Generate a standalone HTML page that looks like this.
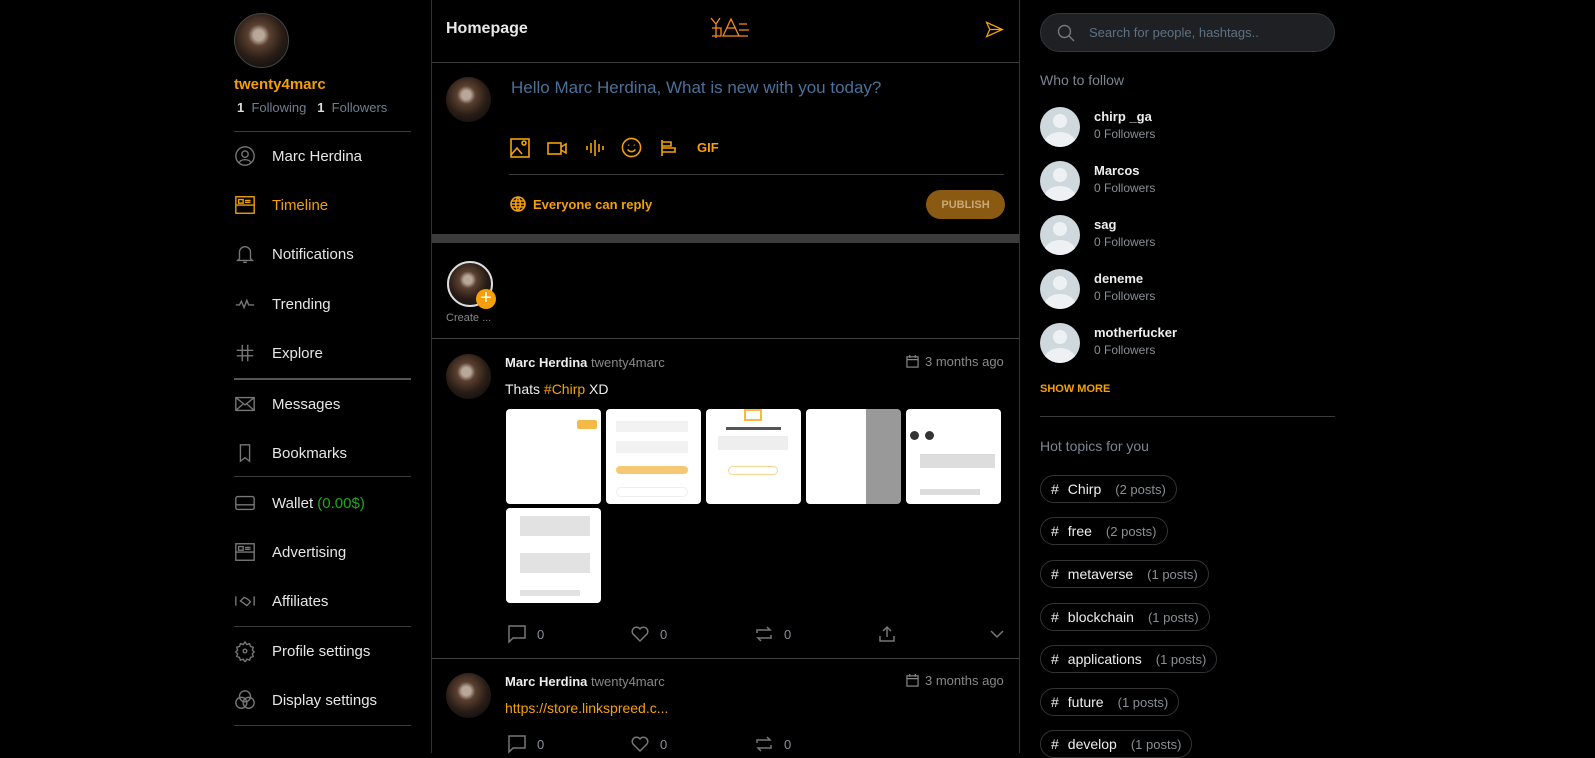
<!DOCTYPE html>
<html><head><meta charset="utf-8"><style>
*{box-sizing:border-box;margin:0;padding:0}
body{width:1595px;height:753px;background:#000;font-family:"Liberation Sans",Arial,sans-serif;color:#e6e6e6;position:relative;overflow:hidden}
.a{position:absolute}
.av{border-radius:50%;background:radial-gradient(circle at 45% 40%,#b9a89a 0 12%,#5a4030 25%,#2a1d16 55%,#111 80%);}
.nav{position:absolute;left:234px;width:177px;height:24px;font-size:15px;display:flex;align-items:center}
.nav svg{width:22px;height:22px;margin-right:16px;fill:none;stroke:#777;stroke-width:1.5}
.hr{position:absolute;background:#3a3a3a;height:1px}
.fw{position:absolute;left:1040px;width:300px;height:40px}
.fw .c{position:absolute;left:0;top:0;width:40px;height:40px;border-radius:50%;background:#cfd8dd;overflow:hidden}
.fw .c:before{content:"";position:absolute;left:13px;top:7px;width:14px;height:14px;border-radius:50%;background:#eef1f3}
.fw .c:after{content:"";position:absolute;left:4px;top:25px;width:32px;height:24px;border-radius:50%;background:#eef1f3}
.fw b{position:absolute;left:54px;top:2px;font-size:13px;color:#eee}
.fw span{position:absolute;left:54px;top:20px;font-size:12px;color:#8a8f94}
.tag{position:absolute;left:1040px;height:28px;border:1px solid #333;border-radius:14px;font-size:14px;padding:0 10px;display:flex;align-items:center;color:#eee;white-space:nowrap}
.tag i{font-style:normal;color:#8a8f94;font-size:13px;margin-left:14px}
.tag em{font-style:normal;margin-right:9px}
.ic{fill:none;stroke:#f5a00a;stroke-width:1.6}
.th{position:absolute;top:409px;width:95px;height:95px;background:#fff;border-radius:4px}
.ft{position:absolute;font-size:13px;color:#8a8f94;display:flex;align-items:center}
.ft svg{width:20px;height:20px;fill:none;stroke:#777;stroke-width:1.5;margin-right:10px}
</style></head><body>
<!-- left -->
<div class="a av" style="left:234px;top:13px;width:55px;height:55px;border:1px solid #444"></div>
<div class="a" style="left:234px;top:76px;font-size:15px;font-weight:bold;color:#f59e0b">twenty4marc</div>
<div class="a" style="left:237px;top:100px;font-size:13px;color:#6f7f8f"><b style="color:#ddd">1</b>&nbsp; Following &nbsp; <b style="color:#ddd">1</b>&nbsp; Followers</div>
<div class="hr" style="left:234px;top:131px;width:177px"></div>
<div class="nav" style="top:144px"><svg viewBox="0 0 24 24"><circle cx="12" cy="12" r="10"/><circle cx="12" cy="10" r="3.5"/><path d="M6 19c1-4 11-4 12 0"/></svg>Marc Herdina</div>
<div class="nav" style="top:193px;color:#f59e0b"><svg viewBox="0 0 24 24" style="stroke:#f59e0b"><rect x="2" y="3" width="20" height="18"/><path d="M2 12h20M5 6h5v4H5zM12 7h6M12 9h6"/></svg>Timeline</div>
<div class="nav" style="top:242px"><svg viewBox="0 0 24 24"><path d="M6 17V10a6 6 0 0112 0v7l2 2H4zM10 21h4"/></svg>Notifications</div>
<div class="nav" style="top:292px"><svg viewBox="0 0 24 24"><path d="M2 13h4l2-4 3 7 3-8 2 5h6"/></svg>Trending</div>
<div class="nav" style="top:341px"><svg viewBox="0 0 24 24"><path d="M9 3v18M15 3v18M3 9h18M3 15h18"/></svg>Explore</div>
<div class="hr" style="left:234px;top:378px;width:177px;background:#555;height:2px"></div>
<div class="nav" style="top:392px"><svg viewBox="0 0 24 24"><rect x="2" y="5" width="20" height="14"/><path d="M2 5l10 8 10-8M2 19l8-7M22 19l-8-7"/></svg>Messages</div>
<div class="nav" style="top:441px"><svg viewBox="0 0 24 24"><path d="M7 3h10v18l-5-4-5 4z"/></svg>Bookmarks</div>
<div class="hr" style="left:234px;top:476px;width:177px"></div>
<div class="nav" style="top:491px"><svg viewBox="0 0 24 24"><rect x="2" y="5" width="20" height="14" rx="2"/><path d="M2 14h20"/></svg>Wallet&nbsp;<span style="color:#1fa81f">(0.00$)</span></div>
<div class="nav" style="top:540px"><svg viewBox="0 0 24 24"><rect x="2" y="3" width="20" height="18"/><path d="M2 12h20M5 6h5v4H5zM12 7h6M12 9h6"/></svg>Advertising</div>
<div class="nav" style="top:589px"><svg viewBox="0 0 24 24"><path d="M2 7v10M22 7v10M7 12l4-4 4 2 3 3-4 4-4-3z"/></svg>Affiliates</div>
<div class="hr" style="left:234px;top:626px;width:177px"></div>
<div class="nav" style="top:639px"><svg viewBox="0 0 24 24"><path d="M12 2l2 3 3-1 1 3 3 1-1 3 2 2-2 2 1 3-3 1-1 3-3-1-2 3-2-3-3 1-1-3-3-1 1-3-2-2 2-2-1-3 3-1 1-3 3 1z"/><circle cx="12" cy="12" r="2"/></svg>Profile settings</div>
<div class="nav" style="top:688px"><svg viewBox="0 0 24 24"><circle cx="12" cy="8" r="6"/><circle cx="8" cy="15" r="6"/><circle cx="16" cy="15" r="6"/></svg>Display settings</div>
<div class="hr" style="left:234px;top:725px;width:177px"></div>

<!-- center -->
<div class="a" style="left:431px;top:0;width:1px;height:753px;background:#333"></div>
<div class="a" style="left:1019px;top:0;width:1px;height:753px;background:#333"></div>
<div class="a" style="left:446px;top:20px;font-size:16px;font-weight:bold;color:#e8e8e8">Homepage</div>
<svg class="a" style="left:709px;top:16px" width="42" height="26" viewBox="0 0 42 26"><path d="M2 2l5 6 4-6M7 8v14M3 12h9v8H3M14 20l8-17 8 17zM18 12h9M30 8h8M30 14h10M30 20h9" fill="none" stroke="#f58a1f" stroke-width="1.3"/></svg>
<svg class="a" style="left:985px;top:20px" width="19" height="19" viewBox="0 0 24 24"><path d="M2 3l20 9-20 9 4-9z M6 12h16" class="ic"/></svg>
<div class="hr" style="left:432px;top:62px;width:587px"></div>
<div class="a av" style="left:446px;top:77px;width:45px;height:45px"></div>
<div class="a" style="left:511px;top:78px;font-size:17px;color:#4b7199">Hello Marc Herdina, What is new with you today?</div>
<svg class="a" style="left:510px;top:138px" width="20" height="20" viewBox="0 0 20 20"><rect x="1" y="1" width="18" height="18" class="ic"/><path d="M1 17l6-7 5 6M12 5a2 2 0 104 0 2 2 0 10-4 0" class="ic"/></svg>
<svg class="a" style="left:547px;top:140px" width="20" height="16" viewBox="0 0 20 16"><rect x="1" y="3" width="13" height="11" class="ic"/><path d="M14 7l5-3v9l-5-3" class="ic"/></svg>
<svg class="a" style="left:585px;top:139px" width="20" height="18" viewBox="0 0 20 18"><path d="M2 7v4M6 4v10M10 1v16M14 5v8M18 7v4" class="ic"/></svg>
<svg class="a" style="left:621px;top:137px" width="21" height="21" viewBox="0 0 22 22"><circle cx="11" cy="11" r="9.5" class="ic"/><path d="M7 13c2 3 6 3 8 0M8 8v1M14 8v1" class="ic"/></svg>
<svg class="a" style="left:660px;top:139px" width="18" height="18" viewBox="0 0 18 18"><path d="M2 1v16M2 3h9v4H2M2 9h13v4H2" class="ic"/></svg>
<div class="a" style="left:697px;top:140px;font-size:13px;font-weight:bold;color:#f5a00a">GIF</div>
<div class="hr" style="left:509px;top:174px;width:495px"></div>
<svg class="a" style="left:510px;top:196px" width="16" height="16" viewBox="0 0 16 16"><circle cx="8" cy="8" r="7" class="ic"/><path d="M1 8h14M8 1c-3 4-3 10 0 14M8 1c3 4 3 10 0 14M2 5h12M2 11h12" class="ic" stroke-width="1.2"/></svg>
<div class="a" style="left:533px;top:197px;font-size:13px;font-weight:bold;color:#f5a00a">Everyone can reply</div>
<div class="a" style="left:926px;top:190px;width:79px;height:29px;border-radius:15px;background:#8a5a12;color:#c9a878;font-size:11px;font-weight:bold;display:flex;align-items:center;justify-content:center">PUBLISH</div>
<div class="a" style="left:432px;top:234px;width:587px;height:9px;background:#3c3c3c"></div>
<div class="a av" style="left:447px;top:261px;width:46px;height:46px;border:2px solid #ddd"></div>
<div class="a" style="left:476px;top:289px;width:20px;height:20px;border-radius:50%;background:#f5a00a;color:#fff;font-size:20px;line-height:18px;text-align:center">+</div>
<div class="a" style="left:446px;top:312px;font-size:11px;color:#888">Create ...</div>
<div class="hr" style="left:432px;top:338px;width:587px;background:#444"></div>
<!-- post 1 -->
<div class="a av" style="left:446px;top:354px;width:45px;height:45px"></div>
<div class="a" style="left:505px;top:355px;font-size:13px"><b style="color:#eee">Marc Herdina</b> <span style="color:#888">twenty4marc</span></div>
<div class="a" style="left:906px;top:354px;font-size:13px;color:#888;display:flex;align-items:center"><svg width="13" height="13" viewBox="0 0 14 14" style="margin-right:6px"><rect x="1" y="2" width="12" height="11" fill="none" stroke="#888" stroke-width="1.3"/><path d="M1 5h12M4 0v3M10 0v3" stroke="#888" stroke-width="1.3"/></svg>3 months ago</div>
<div class="a" style="left:505px;top:381px;font-size:14px;color:#eee">Thats <span style="color:#f5a00a">#Chirp</span> XD</div>
<div class="th" style="left:506px"><div class="a" style="right:4px;top:11px;width:20px;height:9px;background:#f5b94a;border-radius:2px"></div></div>
<div class="th" style="left:606px"><div class="a" style="left:10px;top:12px;width:72px;height:11px;background:#f2f2f2"></div><div class="a" style="left:10px;top:32px;width:72px;height:12px;background:#f2f2f2"></div><div class="a" style="left:10px;top:57px;width:72px;height:8px;background:#f7c873;border-radius:4px"></div><div class="a" style="left:10px;top:78px;width:72px;height:10px;border:1px solid #eee;border-radius:5px"></div></div>
<div class="th" style="left:706px"><div class="a" style="left:38px;top:0;width:18px;height:12px;border:2px solid #f5b94a"></div><div class="a" style="left:20px;top:18px;width:55px;height:3px;background:#555"></div><div class="a" style="left:12px;top:27px;width:70px;height:14px;background:#eee"></div><div class="a" style="left:22px;top:57px;width:50px;height:9px;border:1px solid #f5d495;border-radius:5px"></div></div>
<div class="th" style="left:806px;background:linear-gradient(90deg,#fff 63%,#999 63%)"></div>
<div class="th" style="left:906px"><div class="a" style="left:4px;top:22px;width:9px;height:9px;border-radius:50%;background:#333"></div><div class="a" style="left:19px;top:22px;width:9px;height:9px;border-radius:50%;background:#333"></div><div class="a" style="left:14px;top:45px;width:75px;height:14px;background:#ddd"></div><div class="a" style="left:14px;top:80px;width:60px;height:6px;background:#ddd"></div></div>
<div class="th" style="left:506px;top:508px;height:95px"><div class="a" style="left:14px;top:8px;width:70px;height:20px;background:#e2e2e2"></div><div class="a" style="left:14px;top:45px;width:70px;height:20px;background:#e2e2e2"></div><div class="a" style="left:14px;top:82px;width:60px;height:6px;background:#e2e2e2"></div></div>
<div class="ft" style="left:507px;top:624px"><svg viewBox="0 0 20 20"><path d="M2 2h16v12H6l-4 4z"/></svg>0</div>
<div class="ft" style="left:630px;top:624px"><svg viewBox="0 0 20 20"><path d="M10 17L3 10a4 4 0 017-5 4 4 0 017 5z"/></svg>0</div>
<div class="ft" style="left:754px;top:624px"><svg viewBox="0 0 20 20"><path d="M3 9V6h13l-3-3M17 11v3H4l3 3"/></svg>0</div>
<div class="ft" style="left:877px;top:624px"><svg viewBox="0 0 20 20"><path d="M10 3v10M6 7l4-4 4 4M3 12v5h14v-5"/></svg></div>
<div class="ft" style="left:987px;top:624px"><svg viewBox="0 0 20 20"><path d="M4 7l6 6 6-6"/></svg></div>
<div class="hr" style="left:432px;top:658px;width:587px;background:#444"></div>
<!-- post 2 -->
<div class="a av" style="left:446px;top:673px;width:45px;height:45px"></div>
<div class="a" style="left:505px;top:674px;font-size:13px"><b style="color:#eee">Marc Herdina</b> <span style="color:#888">twenty4marc</span></div>
<div class="a" style="left:906px;top:673px;font-size:13px;color:#888;display:flex;align-items:center"><svg width="13" height="13" viewBox="0 0 14 14" style="margin-right:6px"><rect x="1" y="2" width="12" height="11" fill="none" stroke="#888" stroke-width="1.3"/><path d="M1 5h12M4 0v3M10 0v3" stroke="#888" stroke-width="1.3"/></svg>3 months ago</div>
<div class="a" style="left:505px;top:700px;font-size:14px;color:#f5a00a">https://store.linkspreed.c...</div>
<div class="ft" style="left:507px;top:734px"><svg viewBox="0 0 20 20"><path d="M2 2h16v12H6l-4 4z"/></svg>0</div>
<div class="ft" style="left:630px;top:734px"><svg viewBox="0 0 20 20"><path d="M10 17L3 10a4 4 0 017-5 4 4 0 017 5z"/></svg>0</div>
<div class="ft" style="left:754px;top:734px"><svg viewBox="0 0 20 20"><path d="M3 9V6h13l-3-3M17 11v3H4l3 3"/></svg>0</div>

<!-- right -->
<div class="a" style="left:1040px;top:13px;width:295px;height:39px;border-radius:20px;background:#1e2023;border:1px solid #33363a"></div>
<svg class="a" style="left:1057px;top:24px" width="18" height="18" viewBox="0 0 18 18"><circle cx="7.5" cy="7.5" r="6" fill="none" stroke="#777" stroke-width="1.4"/><path d="M12 12l5 5" stroke="#777" stroke-width="1.4"/></svg>
<div class="a" style="left:1089px;top:25px;font-size:13px;color:#5e7183">Search for people, hashtags..</div>
<div class="a" style="left:1040px;top:72px;font-size:14px;color:#7c8590">Who to follow</div>
<div class="fw" style="top:107px"><div class="c"></div><b>chirp _ga</b><span>0 Followers</span></div>
<div class="fw" style="top:161px"><div class="c"></div><b>Marcos</b><span>0 Followers</span></div>
<div class="fw" style="top:215px"><div class="c"></div><b>sag</b><span>0 Followers</span></div>
<div class="fw" style="top:269px"><div class="c"></div><b>deneme</b><span>0 Followers</span></div>
<div class="fw" style="top:323px"><div class="c"></div><b>motherfucker</b><span>0 Followers</span></div>
<div class="a" style="left:1040px;top:383px;font-size:11px;font-weight:bold;color:#f5a00a">SHOW MORE</div>
<div class="hr" style="left:1040px;top:416px;width:295px"></div>
<div class="a" style="left:1040px;top:438px;font-size:14px;color:#7c8590">Hot topics for you</div>
<div class="tag" style="top:475px"><em>#</em>Chirp<i>(2 posts)</i></div>
<div class="tag" style="top:517px"><em>#</em>free<i>(2 posts)</i></div>
<div class="tag" style="top:560px"><em>#</em>metaverse<i>(1 posts)</i></div>
<div class="tag" style="top:603px"><em>#</em>blockchain<i>(1 posts)</i></div>
<div class="tag" style="top:645px"><em>#</em>applications<i>(1 posts)</i></div>
<div class="tag" style="top:688px"><em>#</em>future<i>(1 posts)</i></div>
<div class="tag" style="top:730px"><em>#</em>develop<i>(1 posts)</i></div>
</body></html>
